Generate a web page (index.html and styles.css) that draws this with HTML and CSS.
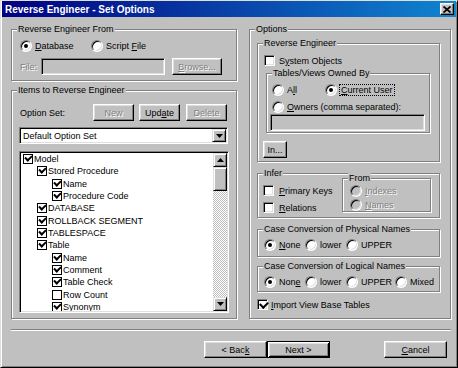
FILE: index.html
```html
<!DOCTYPE html>
<html lang="en">

<head>
    <meta charset="UTF-8">
    <title>Reverse Engineer - Set Options</title>
    <link rel="stylesheet" href="styles.css">
</head>

<body>

    <div class="window">
        <div class="titlebar">
            <span class="title">Reverse Engineer - Set Options</span>
            <span class="close">
                <svg width="8" height="7" viewBox="0 0 8 7"><path d="M0.5 0.5 L7.5 6.5 M7.5 0.5 L0.5 6.5" stroke="#000" stroke-width="1.7" fill="none"/></svg>
            </span>
        </div>

        <div class="content">
            <div class="columns">
                <div class="left-column">
                    <div class="group from-group">
                        <span class="group-title">Reverse Engineer From</span>
                        <div class="row">
                            <label class="opt w71"><span class="radio checked"></span><span><u>D</u>atabase</span></label>
                            <label class="opt"><span class="radio"></span><span>Script <u>F</u>ile</span></label>
                        </div>
                        <div class="row file-row">
                            <span class="muted file-label">File:</span>
                            <span class="field off file-input"></span>
                            <button class="btn browse" disabled><u>B</u>rowse...</button>
                        </div>
                    </div>

                    <div class="group items-group">
                        <span class="group-title">Items to Reverse Engineer</span>
                        <div class="row option-row">
                            <span class="option-label">Option Set:</span>
                            <button class="btn small" disabled>New</button>
                            <button class="btn small update">Upd<u>a</u>te</button>
                            <button class="btn small delete" disabled>Delete</button>
                        </div>
                        <div class="field combo">
                            <span class="combo-text">Default Option Set</span>
                            <span class="arrow-btn">
                                <svg width="7" height="4" viewBox="0 0 7 4"><path d="M0 0 H7 L3.5 4 Z" fill="#000"/></svg>
                            </span>
                        </div>
                        <div class="field tree">
                            <div class="tree-list">
                                <div class="node l0"><span class="cb on"></span>Model</div>
                                <div class="node l1"><span class="cb on"></span>Stored Procedure</div>
                                <div class="node l2"><span class="cb on"></span>Name</div>
                                <div class="node l2"><span class="cb on"></span>Procedure Code</div>
                                <div class="node l1"><span class="cb on"></span>DATABASE</div>
                                <div class="node l1"><span class="cb on"></span>ROLLBACK SEGMENT</div>
                                <div class="node l1"><span class="cb on"></span>TABLESPACE</div>
                                <div class="node l1"><span class="cb on"></span>Table</div>
                                <div class="node l2"><span class="cb on"></span>Name</div>
                                <div class="node l2"><span class="cb on"></span>Comment</div>
                                <div class="node l2"><span class="cb on"></span>Table Check</div>
                                <div class="node l2"><span class="cb"></span>Row Count</div>
                                <div class="node l2"><span class="cb on"></span>Synonym</div>
                            </div>
                            <div class="scrollbar">
                                <span class="arrow-btn sb-btn">
                                    <svg width="7" height="4" viewBox="0 0 7 4"><path d="M0 4 H7 L3.5 0 Z" fill="#000"/></svg>
                                </span>
                                <span class="sb-thumb"></span>
                                <span class="sb-track"></span>
                                <span class="arrow-btn sb-btn">
                                    <svg width="7" height="4" viewBox="0 0 7 4"><path d="M0 0 H7 L3.5 4 Z" fill="#000"/></svg>
                                </span>
                            </div>
                        </div>
                    </div>
                </div>

                <div class="right-column">
                    <div class="group options-group">
                        <span class="group-title">Options</span>

                        <div class="group re-group">
                            <span class="group-title">Reverse Engineer</span>
                            <label class="opt check-row"><span class="check"></span><span>S<u>y</u>stem Objects</span></label>

                            <div class="group owned-group">
                                <span class="group-title">Tables/Views Owned By</span>
                                <div class="row">
                                    <label class="opt w53"><span class="radio"></span><span>A<u>l</u>l</span></label>
                                    <label class="opt tight"><span class="radio checked"></span><span class="focus"><u>C</u>urrent User</span></label>
                                </div>
                                <label class="opt owners-row"><span class="radio"></span><span><u>O</u>wners (comma separated):</span></label>
                                <span class="field off owners-input"></span>
                            </div>

                            <button class="btn in-btn">In...</button>
                        </div>

                        <div class="group infer-group">
                            <span class="group-title">Infer</span>
                            <div class="infer-checks">
                                <label class="opt"><span class="check"></span><span><u>P</u>rimary Keys</span></label>
                                <label class="opt relations"><span class="check"></span><span><u>R</u>elations</span></label>
                            </div>
                            <div class="group from-sub">
                                <span class="group-title">From</span>
                                <label class="opt muted"><span class="radio off"></span><span><u>I</u>ndexes</span></label>
                                <label class="opt muted names"><span class="radio off"></span><span><u>N</u>ames</span></label>
                            </div>
                        </div>

                        <div class="group case-group physical">
                            <span class="group-title">Case Conversion of Physical Names</span>
                            <div class="row">
                                <label class="opt w41"><span class="radio checked"></span><span><u>N</u>one</span></label>
                                <label class="opt w41"><span class="radio"></span><span>lower</span></label>
                                <label class="opt"><span class="radio"></span><span>UPPER</span></label>
                            </div>
                        </div>

                        <div class="group case-group logical">
                            <span class="group-title">Case Conversion of Logical Names</span>
                            <div class="row">
                                <label class="opt w41"><span class="radio checked"></span><span>Non<u>e</u></span></label>
                                <label class="opt w41"><span class="radio"></span><span>lower</span></label>
                                <label class="opt w49"><span class="radio"></span><span>UPPER</span></label>
                                <label class="opt"><span class="radio"></span><span>Mixed</span></label>
                            </div>
                        </div>

                        <label class="opt import-row"><span class="check on"></span><span><u>I</u>mport View Base Tables</span></label>
                    </div>
                </div>
            </div>

            <div class="separator"></div>

            <div class="footer">
                <button class="btn wide">&lt; Bac<u>k</u></button>
                <button class="btn wide default">Next &gt;</button>
                <button class="btn wide cancel"><u>C</u>ancel</button>
            </div>
        </div>
    </div>

</body>

</html>
```

FILE: styles.css
```css
* {
    box-sizing: border-box;
}

body {
    margin: 0;
    background: #c0c0c0;
    font-family: "Liberation Sans", Arial, sans-serif;
    font-size: 9px;
    color: #000;
}

u {
    text-decoration: underline;
    text-underline-offset: 1px;
}

.window {
    width: 458px;
    height: 368px;
    background: #c0c0c0;
    border: 1px solid;
    border-color: #dfdfdf #000 #000 #dfdfdf;
    box-shadow: inset 1px 1px #fff, inset -1px -1px #808080;
    padding: 0 1px 1px 1px;
}

/* title bar */
.titlebar {
    height: 16px;
    display: flex;
    align-items: center;
    justify-content: space-between;
    padding: 0 2px 0 3px;
    background: linear-gradient(to right, #000080, #1084d0);
    color: #fff;
    font-weight: bold;
    font-size: 10px;
}

.close {
    width: 14px;
    height: 12px;
    display: flex;
    align-items: center;
    justify-content: center;
    background: #c0c0c0;
    border: 1px solid;
    border-color: #fff #000 #000 #fff;
    box-shadow: inset -1px -1px #808080, inset 1px 1px #dfdfdf;
}

/* layout */
.content {
    padding: 12px 5px 0 9px;
}

.columns {
    display: flex;
    gap: 12px;
}

.left-column {
    width: 226px;
}

.right-column {
    width: 202px;
}

.row {
    display: flex;
    align-items: center;
}

/* group boxes */
.group {
    position: relative;
    border: 1px solid #808080;
    box-shadow: 1px 1px 0 #fff, inset 1px 1px 0 #fff;
}

.group-title {
    position: absolute;
    top: -6px;
    left: 5px;
    padding: 0 1px;
    line-height: 11px;
    background: #c0c0c0;
    white-space: nowrap;
}

/* controls */
.opt {
    display: flex;
    align-items: center;
    gap: 3px;
    height: 12px;
    white-space: nowrap;
}

.opt.tight {
    gap: 2px;
}

.w41 { width: 41px; }
.w49 { width: 49px; }
.w53 { width: 53px; }
.w71 { width: 71px; }

.radio {
    position: relative;
    flex: none;
    width: 12px;
    height: 12px;
    border-radius: 50%;
    border: 1px solid;
    border-color: #808080 #fff #fff #808080;
    box-shadow: inset 1px 1px #000, inset -1px -1px #dfdfdf;
    background: #fff;
}

.radio.off {
    background: #c0c0c0;
}

.radio.checked::after {
    content: "";
    position: absolute;
    top: 3px;
    left: 3px;
    width: 4px;
    height: 4px;
    border-radius: 50%;
    background: #000;
}

.check {
    position: relative;
    flex: none;
    width: 11px;
    height: 11px;
    border: 1px solid;
    border-color: #808080 #fff #fff #808080;
    box-shadow: inset 1px 1px #000, inset -1px -1px #dfdfdf;
    background: #fff;
}

.check.on::after {
    content: "";
    position: absolute;
    left: 2px;
    top: 1px;
    width: 6px;
    height: 4px;
    border-left: 2px solid #000;
    border-bottom: 2px solid #000;
    transform: rotate(-45deg);
}

.focus {
    border: 1px dotted #000;
    padding: 0 1px;
    line-height: 10px;
}

.muted {
    color: #808080;
    text-shadow: 1px 1px 0 #fff;
}

.btn {
    height: 17px;
    padding: 0;
    font: inherit;
    color: #000;
    background: #c0c0c0;
    border: 1px solid;
    border-color: #fff #000 #000 #fff;
    box-shadow: inset -1px -1px #808080, inset 1px 1px #dfdfdf;
}

.btn:disabled {
    color: #808080;
    text-shadow: 1px 1px 0 #fff;
}

.btn.default {
    border-color: #000;
    box-shadow: inset 1px 1px #fff, inset -1px -1px #000, inset 2px 2px #dfdfdf, inset -2px -2px #808080;
}

.field {
    height: 17px;
    border: 1px solid;
    border-color: #808080 #fff #fff #808080;
    box-shadow: inset 1px 1px #000, inset -1px -1px #dfdfdf;
    background: #fff;
}

.field.off {
    background: #c0c0c0;
}

.arrow-btn {
    display: flex;
    align-items: center;
    justify-content: center;
    width: 14px;
    height: 13px;
    background: #c0c0c0;
    border: 1px solid;
    border-color: #dfdfdf #000 #000 #dfdfdf;
    box-shadow: inset 1px 1px #fff, inset -1px -1px #808080;
}

/* reverse engineer from */
.from-group {
    height: 52px;
    padding: 10px 0 0 8px;
}

.file-row {
    margin-top: 6px;
}

.file-label {
    width: 21px;
}

.file-input {
    width: 124px;
}

.browse {
    width: 50px;
    margin-left: 7px;
}

/* items to reverse engineer */
.items-group {
    height: 229px;
    margin-top: 9px;
    padding: 13px 0 0 7px;
}

.option-row {
    height: 17px;
}

.option-label {
    width: 73px;
    margin-left: 1px;
}

.btn.small {
    width: 41px;
}

.btn.update {
    margin-left: 5px;
}

.btn.delete {
    margin-left: 6px;
}

.combo {
    display: flex;
    align-items: center;
    justify-content: space-between;
    width: 209px;
    margin-top: 6px;
    padding: 1px;
}

.combo-text {
    padding-left: 2px;
}

.tree {
    display: flex;
    width: 210px;
    height: 162px;
    margin-top: 7px;
    padding: 1px;
}

.tree-list {
    flex: 1;
    overflow: hidden;
    background: #fff;
}

.node {
    display: flex;
    align-items: center;
    gap: 1px;
    height: 12.33px;
    white-space: nowrap;
}

.node.l0 { padding-left: 2px; }
.node.l1 { padding-left: 16px; }
.node.l2 { padding-left: 31px; }

.cb {
    position: relative;
    flex: none;
    width: 10px;
    height: 10px;
    border: 1px solid #000;
    background: #fff;
}

.cb.on::after {
    content: "";
    position: absolute;
    left: 1px;
    top: 0;
    width: 5px;
    height: 3px;
    border-left: 2px solid #000;
    border-bottom: 2px solid #000;
    transform: rotate(-45deg);
}

.scrollbar {
    display: flex;
    flex-direction: column;
    width: 14px;
}

.sb-btn {
    height: 14px;
}

.sb-thumb {
    height: 24px;
    background: #c0c0c0;
    border: 1px solid;
    border-color: #dfdfdf #000 #000 #dfdfdf;
    box-shadow: inset 1px 1px #fff, inset -1px -1px #808080;
}

.sb-track {
    flex: 1;
    background: repeating-conic-gradient(#fff 0 25%, #c0c0c0 0 50%) 0 0 / 2px 2px;
}

/* options */
.options-group {
    height: 290px;
    padding: 13px 0 0 7px;
}

.re-group {
    width: 183px;
    height: 119px;
    padding: 11px 0 0 6px;
}

.check-row {
    gap: 4px;
    height: 11px;
}

.owned-group {
    width: 164px;
    height: 60px;
    margin: 7px 0 0 2px;
    padding: 10px 0 0 5px;
}

.owners-row {
    margin-top: 5px;
}

.owners-input {
    display: block;
    width: 155px;
    margin: 1px 0 0 -2px;
}

.in-btn {
    width: 24px;
    margin: 8px 0 0 -1px;
}

.infer-group {
    display: flex;
    width: 183px;
    height: 45px;
    margin-top: 11px;
    padding-left: 5px;
}

.infer-checks {
    width: 79px;
    padding-top: 11px;
}

.infer-checks .opt {
    gap: 5px;
    height: 11px;
}

.infer-checks .relations {
    margin-top: 6px;
}

.from-sub {
    width: 89px;
    height: 34px;
    margin-top: 4px;
    padding: 6px 0 0 7px;
}

.from-sub .names {
    margin-top: 2px;
}

.case-group {
    width: 183px;
    padding: 9px 0 0 6px;
}

.physical {
    height: 28px;
    margin-top: 11px;
}

.logical {
    height: 26px;
    margin-top: 9px;
}

.import-row {
    height: 11px;
    margin-top: 7px;
    gap: 3px;
}

/* bottom */
.separator {
    margin-top: 10px;
    border-top: 1px solid #808080;
    border-bottom: 1px solid #fff;
}

.footer {
    display: flex;
    justify-content: flex-end;
    margin-top: 10px;
    padding-right: 4px;
}

.btn.wide {
    width: 63px;
}

.btn.cancel {
    margin-left: 54px;
}
```
